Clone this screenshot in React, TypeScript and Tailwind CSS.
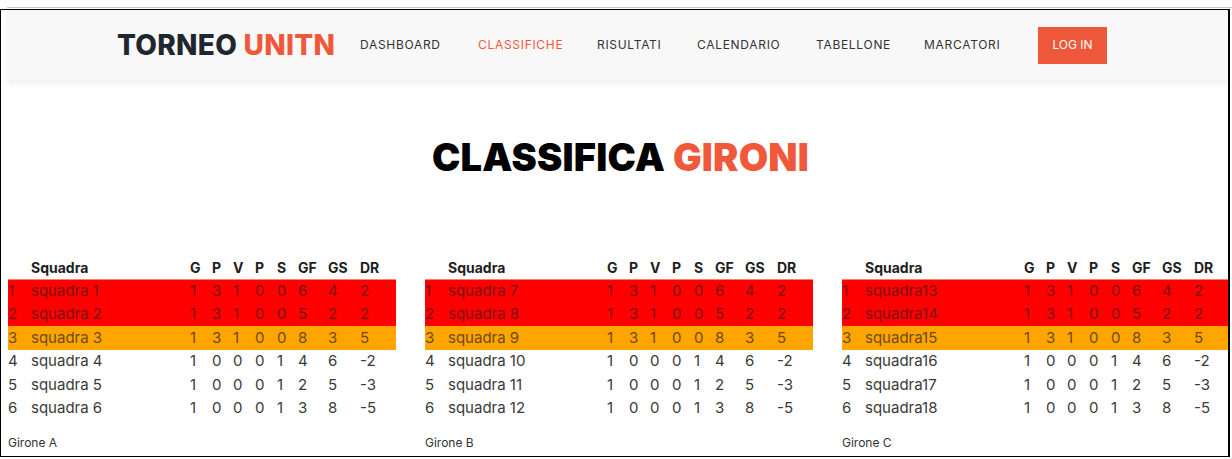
import React from "react";

type Row = { pos: number; name: string; vals: string[] };

const groups: { label: string; rows: Row[] }[] = [
  {
    label: "Girone A",
    rows: [
      { pos: 1, name: "squadra 1", vals: ["1", "3", "1", "0", "0", "6", "4", "2"] },
      { pos: 2, name: "squadra 2", vals: ["1", "3", "1", "0", "0", "5", "2", "2"] },
      { pos: 3, name: "squadra 3", vals: ["1", "3", "1", "0", "0", "8", "3", "5"] },
      { pos: 4, name: "squadra 4", vals: ["1", "0", "0", "0", "1", "4", "6", "-2"] },
      { pos: 5, name: "squadra 5", vals: ["1", "0", "0", "0", "1", "2", "5", "-3"] },
      { pos: 6, name: "squadra 6", vals: ["1", "0", "0", "0", "1", "3", "8", "-5"] },
    ],
  },
  {
    label: "Girone B",
    rows: [
      { pos: 1, name: "squadra 7", vals: ["1", "3", "1", "0", "0", "6", "4", "2"] },
      { pos: 2, name: "squadra 8", vals: ["1", "3", "1", "0", "0", "5", "2", "2"] },
      { pos: 3, name: "squadra 9", vals: ["1", "3", "1", "0", "0", "8", "3", "5"] },
      { pos: 4, name: "squadra 10", vals: ["1", "0", "0", "0", "1", "4", "6", "-2"] },
      { pos: 5, name: "squadra 11", vals: ["1", "0", "0", "0", "1", "2", "5", "-3"] },
      { pos: 6, name: "squadra 12", vals: ["1", "0", "0", "0", "1", "3", "8", "-5"] },
    ],
  },
  {
    label: "Girone C",
    rows: [
      { pos: 1, name: "squadra13", vals: ["1", "3", "1", "0", "0", "6", "4", "2"] },
      { pos: 2, name: "squadra14", vals: ["1", "3", "1", "0", "0", "5", "2", "2"] },
      { pos: 3, name: "squadra15", vals: ["1", "3", "1", "0", "0", "8", "3", "5"] },
      { pos: 4, name: "squadra16", vals: ["1", "0", "0", "0", "1", "4", "6", "-2"] },
      { pos: 5, name: "squadra17", vals: ["1", "0", "0", "0", "1", "2", "5", "-3"] },
      { pos: 6, name: "squadra18", vals: ["1", "0", "0", "0", "1", "3", "8", "-5"] },
    ],
  },
];

const headers = ["G", "P", "V", "P", "S", "GF", "GS", "DR"];
const gridCls =
  "grid grid-cols-[23px_159px_22px_21px_22px_22px_21px_30px_32px_36px] items-center";

function Table({ label, rows }: { label: string; rows: Row[] }) {
  return (
    <div className="w-[388px] shrink-0">
      <div className={`${gridCls} h-[23px] text-[14px] font-bold text-[#1e1e1e]`}>
        <div />
        <div>Squadra</div>
        {headers.map((h, i) => (
          <div key={i}>{h}</div>
        ))}
      </div>
      {rows.map((r) => {
        const bg =
          r.pos === 1
            ? "bg-[#ff0000] text-[#7d1111] border-t border-[#ff7a7a]"
            : r.pos === 2
            ? "bg-[#ff0000] text-[#7d1111]"
            : r.pos === 3
            ? "bg-[#ffa500] text-[#6e4a10]"
            : "text-[#3a3a3a]";
        return (
          <div key={r.pos} className={`${gridCls} h-[23.5px] text-[15px] ${bg}`}>
            <div>{r.pos}</div>
            <div>{r.name}</div>
            {r.vals.map((v, i) => (
              <div key={i}>{v}</div>
            ))}
          </div>
        );
      })}
      <div className="mt-[14px] text-[12px] text-[#333]">{label}</div>
    </div>
  );
}

export default function App() {
  return (
    <div
      className="w-[1232px] h-[459px] bg-white overflow-hidden"
      style={{ fontFamily: "Inter, 'Noto Sans', sans-serif" }}
    >
      <div className="pt-[7px]">
        <div className="ml-[7px] h-px bg-[#c9c9c9]" />
        <div className="mt-px w-[1230px] h-[448px] border border-black border-r-2 overflow-hidden">
          <nav className="ml-[6px] h-[70px] bg-[#f8f8f8] shadow-[0_4px_6px_rgba(0,0,0,0.06)] flex items-center pl-[110px]">
            <div className="w-[218px] text-[28px] font-extrabold tracking-[0.3px] leading-none text-[#1f2630] whitespace-nowrap">
              TORNEO <span className="text-[#f0583b]">UNITN</span>
            </div>
            <div className="ml-[25px] flex items-center text-[12px] tracking-[0.7px] text-[#333] whitespace-nowrap">
              <span className="w-[118px]">DASHBOARD</span>
              <span className="w-[119px] text-[#f0583b]">CLASSIFICHE</span>
              <span className="w-[100px]">RISULTATI</span>
              <span className="w-[119px]">CALENDARIO</span>
              <span className="w-[108px]">TABELLONE</span>
              <span className="w-[114px]">MARCATORI</span>
              <button className="h-[37px] w-[69px] bg-[#ef573a] text-white text-[12px] tracking-normal">
                LOG IN
              </button>
            </div>
          </nav>
          <h1 className="mt-[53px] pl-[12px] text-center text-[38px] font-black leading-[48px] text-black tracking-[0.2px]">
            CLASSIFICA <span className="text-[#f0583b]">GIRONI</span>
          </h1>
          <div className="mt-[75px] ml-[7px] flex gap-[29px]">
            {groups.map((g) => (
              <Table key={g.label} label={g.label} rows={g.rows} />
            ))}
          </div>
        </div>
      </div>
    </div>
  );
}
